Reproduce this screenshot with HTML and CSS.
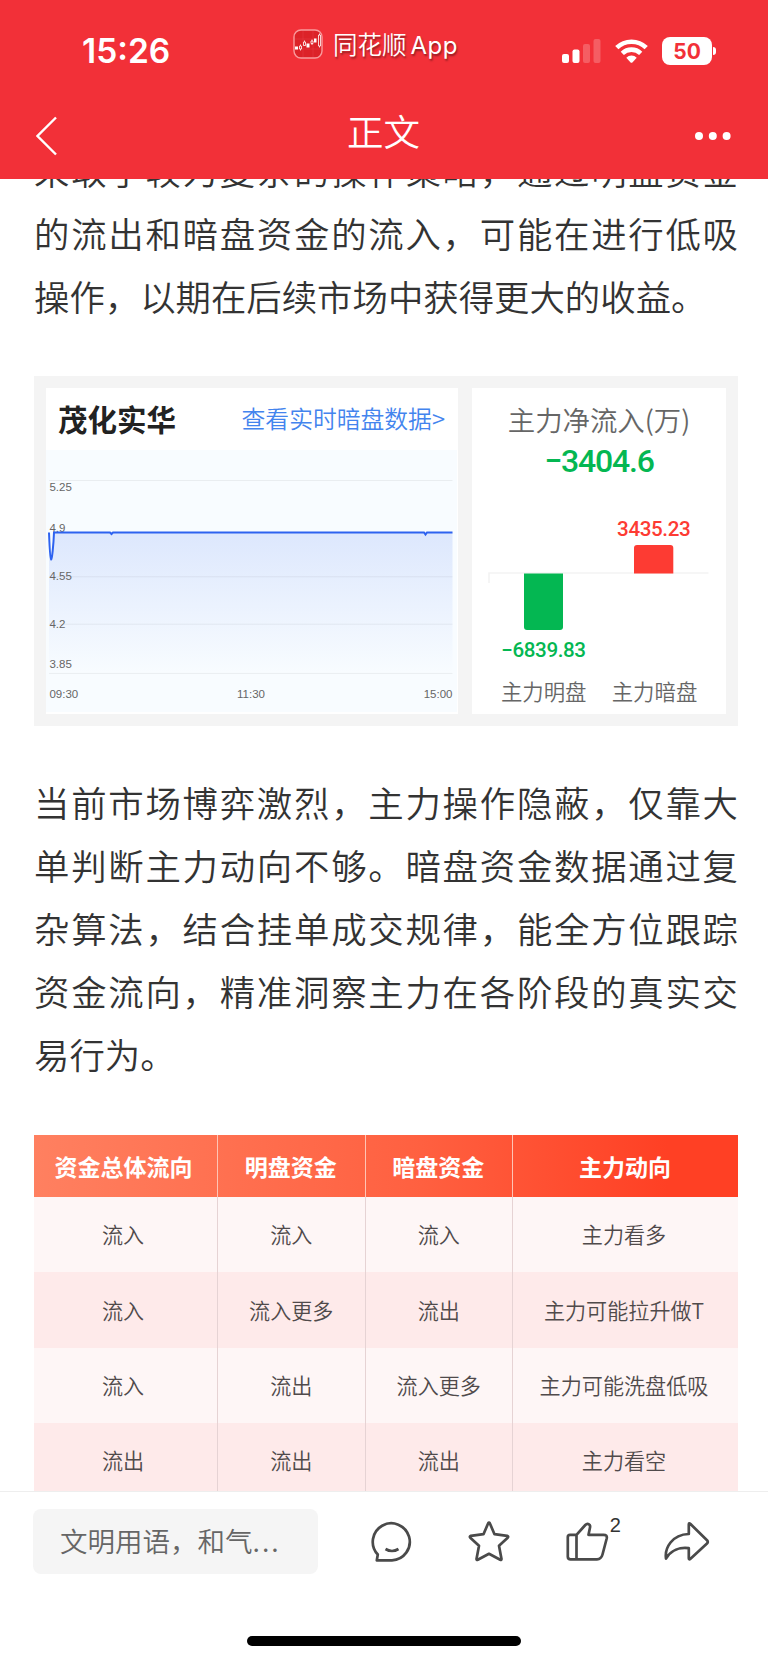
FILE: index.html
```html
<!DOCTYPE html>
<html lang="zh-CN">
<head>
    <meta charset="UTF-8">
    <title>正文</title>
    <link rel="stylesheet" href="styles.css">
</head>
<body>
    <header class="header">
        <div class="status-bar">
            <span class="time">15:26</span>
            <div class="app-name">
                <svg class="app-icon" width="30" height="30" viewBox="0 0 30 30">
                    <rect x="1" y="1" width="28" height="28" rx="7" fill="#dc2228" stroke="#f99a9c" stroke-width="1.4"/>
                    <path d="M2 10h26M2 20h26M10 2v26M20 2v26" stroke="#e63a40" stroke-width=".6"/>
                    <path d="M2 17.500h3v3H2zM13.500 14.500h3v4h-3zM21 9.500h2.500v4H21z" fill="#fff"/>
                    <path d="M6.500 17h2v3h-2zM7.500 15.500V17M7.500 20v1.500M10.500 13h2v3.500h-2zM11.500 11.500V13M18 12h2v2.500h-2zM19 10.500V12M19 14.500V16M25.500 6h2v11h-2zM26.500 4.500V6M26.500 17v1.500" fill="none" stroke="#fff" stroke-width=".8"/>
                </svg>
                <span class="app-label">同花顺<span class="latin">App</span></span>
            </div>
            <div class="status-icons">
                <svg width="39" height="24" viewBox="0 0 39 24" fill="#fff">
                    <rect x="0" y="15" width="7" height="9" rx="2"/>
                    <rect x="10.500" y="10.500" width="7" height="13.500" rx="2"/>
                    <rect x="21" y="5" width="7" height="19" rx="2" opacity=".22"/>
                    <rect x="31.500" y="0" width="7" height="24" rx="2" opacity=".22"/>
                </svg>
                <svg width="33" height="24" viewBox="0 0 33 24">
                    <path d="M1.800 8.700A21 21 0 0 1 31.200 8.700M7.300 14.300A13.300 13.300 0 0 1 25.700 14.300" fill="none" stroke="#fff" stroke-width="4.600"/>
                    <path d="M11.300 18.700A7.300 7.300 0 0 1 21.700 18.700L17.400 23.400Q16.500 24.300 15.600 23.400Z" fill="#fff"/>
                </svg>
                <div class="battery"><span>50</span></div>
            </div>
        </div>
        <nav class="nav">
            <svg width="22" height="40" viewBox="0 0 22 40">
                <path d="M20 1.500 1.500 20 20 38.500" fill="none" stroke="#fff" stroke-width="2.400"/>
            </svg>
            <h1>正文</h1>
            <svg class="more" width="36" height="8" viewBox="0 0 36 8" fill="#fff">
                <circle cx="4" cy="4" r="4"/><circle cx="17.800" cy="4" r="4"/><circle cx="31.600" cy="4" r="4"/>
            </svg>
        </nav>
    </header>

    <main class="content">
        <p class="text">采取了较为复杂的操作策略，通过明盘资金的流出和暗盘资金的流入，可能在进行低吸操作，以期在后续市场中获得更大的收益。</p>

        <section class="stock">
            <div class="panel trend">
                <div class="trend-head">
                    <h2>茂化实华</h2>
                    <a>查看实时暗盘数据&gt;</a>
                </div>
                <svg class="trend-chart" width="411" height="262" viewBox="0 0 411 262">
                    <defs>
                        <linearGradient id="area" x1="0" y1="0" x2="0" y2="1">
                            <stop offset="0" stop-color="#2d62f0" stop-opacity=".135"/>
                            <stop offset="1" stop-color="#2d62f0" stop-opacity="0"/>
                        </linearGradient>
                    </defs>
                    <path d="M3 82.500 5 110 8 82.500H406.500V223H3z" fill="url(#area)"/>
                    <path d="M3 30.500H406.500M3 126.800H406.500M3 174.200H406.500M3 223.400H406.500" stroke="#000" stroke-opacity=".06"/>
                    <g class="axis">
                        <text x="3.400" y="40.500">5.25</text>
                        <text x="3.400" y="81.500">4.9</text>
                        <text x="3.400" y="129.800">4.55</text>
                        <text x="3.400" y="177.600">4.2</text>
                        <text x="3.400" y="217.600">3.85</text>
                        <text x="3.400" y="247.800">09:30</text>
                        <text x="205" y="247.800" text-anchor="middle">11:30</text>
                        <text x="406.500" y="247.800" text-anchor="end">15:00</text>
                    </g>
                    <path d="M3 82.500C3.500 95 4 109 5 109.500S7.500 95 8 82.500H64L65.500 84 67 82.500H378L379.500 84.500 381 82.500H406.500" fill="none" stroke="#2d62f0" stroke-width="2"/>
                </svg>
            </div>
            <div class="panel flow">
                <h3>主力净流入(万)</h3>
                <strong>−3404.6</strong>
                <svg class="flow-chart" width="254" height="190" viewBox="0 0 254 190">
                    <path d="M17 59V49H236.500" fill="none" stroke="#f3f3f3" stroke-width="1.600"/>
                    <path d="M52 49.500H91V103a3 3 0 0 1-3 3H55a3 3 0 0 1-3-3z" fill="#04b752"/>
                    <path d="M162 49.500V24a3 3 0 0 1 3-3H198.300a3 3 0 0 1 3 3V49.500z" fill="#fd3b33"/>
                    <text class="value red" x="181.700" y="12">3435.23</text>
                    <text class="value green" x="71.500" y="133">−6839.83</text>
                    <text class="label" x="71.700" y="176">主力明盘</text>
                    <text class="label" x="182.500" y="176">主力暗盘</text>
                </svg>
            </div>
        </section>

        <p class="text">当前市场博弈激烈，主力操作隐蔽，仅靠大单判断主力动向不够。暗盘资金数据通过复杂算法，结合挂单成交规律，能全方位跟踪资金流向，精准洞察主力在各阶段的真实交易行为。</p>

        <table class="funds">
            <thead>
                <tr><th class="wide">资金总体流向</th><th>明盘资金</th><th>暗盘资金</th><th class="last">主力动向</th></tr>
            </thead>
            <tbody>
                <tr><td>流入</td><td>流入</td><td>流入</td><td>主力看多</td></tr>
                <tr><td>流入</td><td>流入更多</td><td>流出</td><td>主力可能拉升做T</td></tr>
                <tr><td>流入</td><td>流出</td><td>流入更多</td><td>主力可能洗盘低吸</td></tr>
                <tr><td>流出</td><td>流出</td><td>流出</td><td>主力看空</td></tr>
            </tbody>
        </table>
    </main>

    <footer class="footer">
        <div class="toolbar">
            <div class="comment-input">文明用语，和气<span class="dots">...</span></div>
            <div class="actions">
                <svg width="44" height="44" viewBox="0 0 44 44">
                    <path d="M6.800 40.300H22A18.500 18.500 0 1 0 7.800 34.500zM15.500 29Q22 33 28.500 29"/>
                </svg>
                <svg width="44" height="44" viewBox="0 0 44 44">
                    <path d="M21.200 3.200Q22 1.800 22.800 3.200L27.500 14.200 40.200 15.900Q41.800 16.400 40.700 17.700L32 25.800 34.500 39Q34.500 40.400 33.200 39.800L22 33.800 10.800 39.800Q9.500 40.400 9.500 39L12 25.800 3.300 17.700Q2.200 16.400 3.800 15.900L16.500 14.200z"/>
                </svg>
                <div class="like">
                    <svg width="44" height="44" viewBox="0 0 44 44">
                        <path d="M2.800 17Q2.800 14.800 5 14.800H11.500L20.300 5Q22 3.200 23.800 4.200 25.500 5 25 7.500L23.500 14.800H38.500Q42.500 14.800 41.700 18.500L37.500 34.500Q36.200 39.300 32 39.300H5.500Q2.800 39.300 2.800 36.800zM11.500 14.800V39.300"/>
                    </svg>
                    <span class="count">2</span>
                </div>
                <svg width="48" height="44" viewBox="0 0 48 44">
                    <path d="M26.800 4.500Q26.800 2.500 28.500 4L45 20.200Q46.500 21.900 45 23.600L28.500 38.800Q26.800 40.200 26.800 38.200V28.200C18 27 9 30 4 38.500 2.500 28 10 14.500 26.800 14z"/>
                </svg>
            </div>
        </div>
        <div class="home-indicator"></div>
    </footer>
</body>
</html>
```
FILE: styles.css
```css
* {
    box-sizing: border-box;
}
body {
    margin: 0;
    width: 768px;
    height: 1663px;
    display: flex;
    flex-direction: column;
    overflow: hidden;
    background: #fff;
    color: #333;
    font-family: "Noto Sans CJK SC", sans-serif;
    font-weight: 350;
}
h1, h2, h3, p {
    margin: 0;
    font-weight: 350;
}
svg {
    display: block;
    flex: none;
}

/* header */
.header {
    flex: none;
    height: 179px;
    background: #f23038;
    color: #fff;
}
.status-bar {
    height: 92px;
    padding: 0 56px 0 82px;
    display: flex;
    align-items: flex-start;
}
.time {
    width: 211px;
    padding-top: 31px;
    font: 600 33.5px/41px Inter, sans-serif;
}
.app-name {
    display: flex;
    gap: 10px;
    padding-top: 29px;
    font-size: 24.5px;
    text-shadow: 1px 2px 2px rgba(0, 0, 0, .4);
}
.app-label {
    line-height: 30px;
}
.latin {
    margin-left: 4px;
    font-family: Inter, sans-serif;
    font-size: 24px;
    font-weight: 400;
    letter-spacing: .5px;
}
.status-icons {
    margin-left: auto;
    padding-top: 37px;
    display: flex;
    align-items: center;
    gap: 14px;
}
.battery {
    position: relative;
    width: 50px;
    height: 28px;
    border-radius: 8px;
    background: #fff;
    color: #f23038;
    font: 700 21px/29px Inter, sans-serif;
    text-align: center;
}
.battery::after {
    content: "";
    position: absolute;
    left: 51px;
    top: 10px;
    width: 3px;
    height: 8px;
    border-radius: 0 4px 4px 0;
    background: #fff;
}
.nav {
    height: 87px;
    padding: 0 37px 0 36px;
    display: flex;
    justify-content: space-between;
    align-items: center;
}
.nav h1 {
    padding: 0 0 9px 14px;
    font-size: 36.5px;
    line-height: 46px;
}

/* article */
.content {
    flex: none;
    height: 1312px;
    padding: 0 30px 0 34px;
    overflow: hidden;
}
.text {
    width: 704px;
    font-size: 35.4px;
    line-height: 63px;
    text-align: justify;
}
.content > .text:first-child {
    margin-top: -41px;
}

/* stock card */
.stock {
    width: 704px;
    height: 350px;
    margin: 49px 0 44px;
    padding: 12px;
    display: flex;
    gap: 14px;
    background: #f4f4f4;
}
.panel {
    height: 326px;
    background: #fff;
}
.trend {
    width: 412px;
}
.trend-head {
    height: 62px;
    padding: 0 13px 3px 12px;
    display: flex;
    justify-content: space-between;
    align-items: center;
}
.trend-head h2 {
    color: #222;
    font-size: 29.5px;
    font-weight: 700;
}
.trend-head a {
    color: #4384ee;
    font-size: 23.8px;
}
.trend-chart {
    background: #f8fcff;
}
.axis {
    fill: #666;
    font: 11.5px "Liberation Sans", sans-serif;
}
.flow {
    width: 254px;
    text-align: center;
}
.flow h3 {
    padding-top: 11px;
    color: #666;
    font-size: 27.4px;
    line-height: 40px;
}
.flow strong {
    display: block;
    height: 85px;
    color: #04b752;
    font: 500 32px/44px Roboto, sans-serif;
    letter-spacing: -1.2px;
}
.flow-chart {
    overflow: visible;
}
.flow-chart text {
    text-anchor: middle;
}
.value {
    font: 500 20.6px Roboto, sans-serif;
    letter-spacing: -.4px;
}
.red {
    fill: #fd3b33;
}
.green {
    fill: #04b752;
}
.label {
    fill: #666;
    font-size: 21.4px;
}

/* table */
.funds {
    width: 704px;
    margin-top: 50px;
    table-layout: fixed;
    border-collapse: separate;
    border-spacing: 0;
    text-align: center;
}
.funds thead {
    background: linear-gradient(90deg, #ff8060, #ff6040 55%, #ff4024 90%);
}
.funds th {
    width: 147.5px;
    height: 62px;
    padding: 0 1px 1px 0;
    border-right: 1px solid #ffc4b5;
    color: #fff;
    font-size: 23px;
    font-weight: 700;
}
.funds .wide {
    width: 184px;
    padding-right: 4px;
}
.funds .last {
    width: 225px;
}
.funds td {
    height: 75.4px;
    padding: 0 0 1px 0;
    border-right: 1px solid #e6d3d4;
    color: #504a4b;
    font-size: 21.1px;
}
.funds td:first-child {
    padding-right: 5px;
}
.funds td:last-child {
    padding-right: 3px;
}
.funds th:last-child, .funds td:last-child {
    border-right: 0;
}
.funds tbody tr {
    background: #fef6f6;
}
.funds tbody tr:nth-child(even) {
    background: #feeaea;
}

/* footer */
.footer {
    height: 172px;
    border-top: 1px solid #eee;
    background: #fff;
}
.toolbar {
    display: flex;
    padding: 17px 58px 0 33px;
}
.comment-input {
    width: 285px;
    height: 65px;
    padding-left: 27px;
    border-radius: 8px;
    background: #f5f5f5;
    color: #666;
    font-size: 27.5px;
    line-height: 62px;
}
.dots {
    letter-spacing: 2px;
}
.actions {
    flex: 1;
    margin-left: 52px;
    padding-top: 11px;
    display: flex;
    justify-content: space-between;
    fill: none;
    stroke: #4a4a4a;
    stroke-width: 2.7px;
    stroke-linejoin: round;
}
.like {
    position: relative;
}
.count {
    position: absolute;
    left: 45px;
    top: -6px;
    color: #333;
    font: 20px/22px "Liberation Sans", sans-serif;
}
.home-indicator {
    width: 274px;
    height: 10px;
    margin: 62px auto 0;
    border-radius: 5px;
    background: #000;
}
```
